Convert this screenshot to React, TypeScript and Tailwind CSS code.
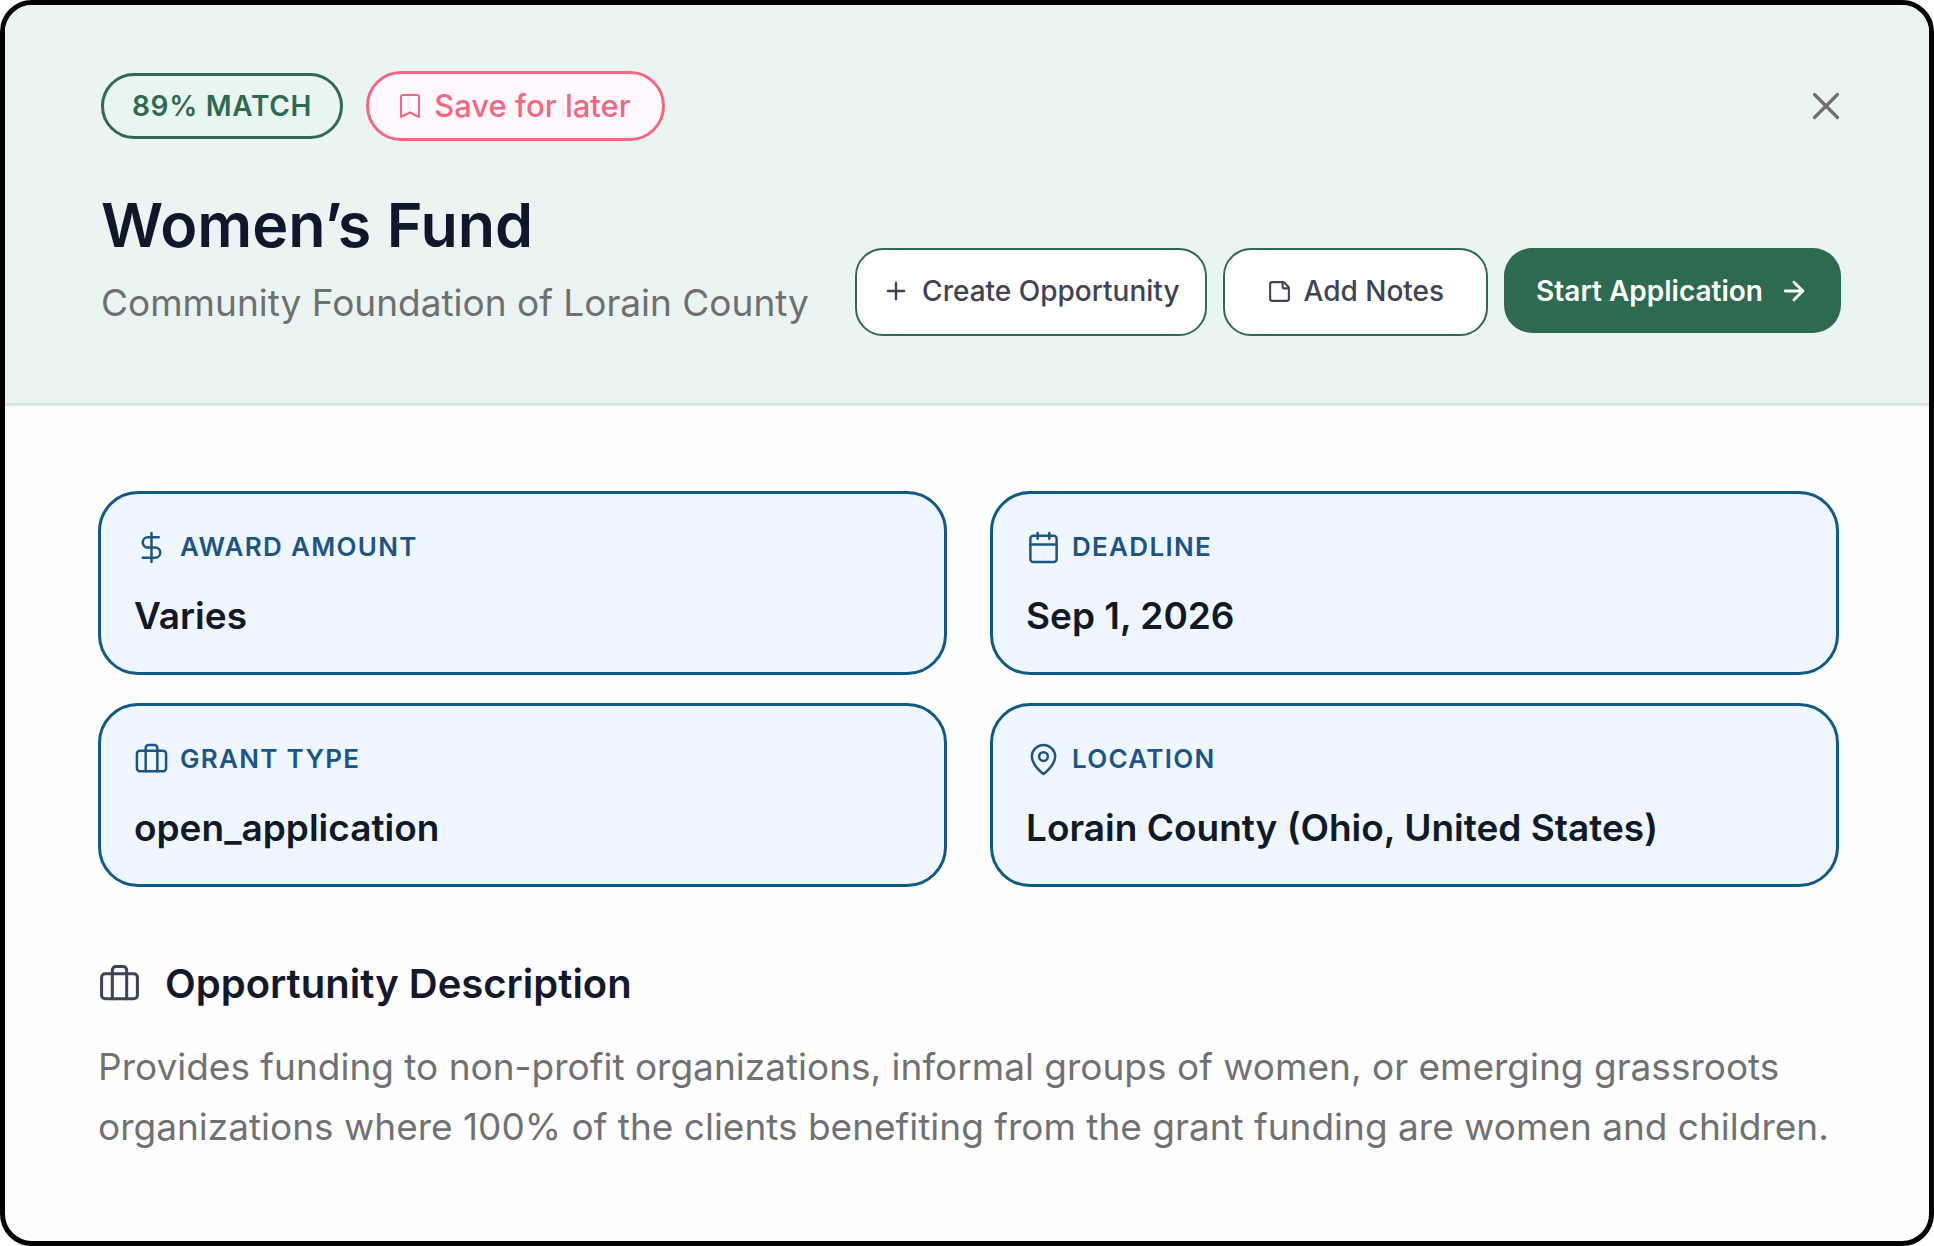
import type { ReactNode } from 'react'
import { ArrowRight, Calendar, DollarSign, Plus, StickyNote, X } from 'lucide-react'

function BriefcaseIcon({ className }: { className?: string }) {
  return (
    <svg
      viewBox="0 0 24 24"
      fill="none"
      stroke="currentColor"
      strokeWidth={1.7}
      strokeLinecap="round"
      strokeLinejoin="round"
      className={className}
      aria-hidden="true"
    >
      <rect x="2" y="6" width="20" height="14" rx="2" />
      <path d="M16 20V4a2 2 0 0 0-2-2h-4a2 2 0 0 0-2 2v16" />
    </svg>
  )
}

function PinIcon({ className }: { className?: string }) {
  return (
    <svg
      viewBox="0 0 24 24"
      fill="none"
      stroke="currentColor"
      strokeWidth={1.7}
      strokeLinecap="round"
      strokeLinejoin="round"
      className={className}
      aria-hidden="true"
    >
      <path d="M20 10c0 6-8 12-8 12s-8-6-8-12a8 8 0 0 1 16 0Z" />
      <circle cx="12" cy="10" r="3" />
    </svg>
  )
}

function BookmarkIcon({ className }: { className?: string }) {
  return (
    <svg
      viewBox="0 0 20 24"
      fill="none"
      stroke="currentColor"
      strokeWidth={2}
      strokeLinecap="round"
      strokeLinejoin="round"
      className={className}
      aria-hidden="true"
    >
      <path d="M19 23l-9-4.5L1 23V3a2 2 0 0 1 2-2h14a2 2 0 0 1 2 2z" />
    </svg>
  )
}

function DetailCard({ icon, label, value }: { icon: ReactNode; label: string; value: string }) {
  return (
    <div className="rounded-[40px] border-3 border-[#125a86] bg-[#eff6ff] pt-[35px] pr-8 pb-8 pl-[33px]">
      <dt className="flex items-center gap-[11px] text-[26px] leading-9 font-semibold tracking-wider text-[#1c5585] uppercase">
        {icon}
        {label}
      </dt>
      <dd className="mt-[27px] text-[37px] leading-12 font-semibold text-[#111827]">{value}</dd>
    </div>
  )
}

const details = [
  { label: 'Award Amount', value: 'Varies', icon: <DollarSign className="size-[35px]" strokeWidth={1.7} /> },
  { label: 'Deadline', value: 'Sep 1, 2026', icon: <Calendar className="size-[35px]" strokeWidth={1.7} /> },
  { label: 'Grant Type', value: 'open_application', icon: <BriefcaseIcon className="size-[35px]" /> },
  { label: 'Location', value: 'Lorain County (Ohio, United States)', icon: <PinIcon className="size-[35px]" /> },
]

export default function App() {
  return (
    <main className="flex min-h-screen flex-col overflow-hidden rounded-[32px] border-5 border-black bg-[#fefefe] font-['Inter',sans-serif]">
      <header className="border-b-3 border-[#d7e7e4] bg-[#eaf4f2] pt-[66px] pr-22 pb-[67px] pl-24">
        <div className="flex items-center gap-[23px]">
          <span className="rounded-full border-3 border-[#2d6a4f] bg-[#e9f5f0] px-7 py-3 text-[28px] leading-9 font-semibold tracking-wide text-[#2d6a4f]">
            89% MATCH
          </span>
          <button
            type="button"
            className="flex items-center gap-[14px] rounded-full border-3 border-[#f4687f] bg-[#fff8fe] px-[31px] py-3 text-[31px] leading-10 font-medium text-[#f4687f]"
          >
            <BookmarkIcon className="h-6 w-5" />
            Save for later
          </button>
          <button type="button" aria-label="Close" className="-mr-2 ml-auto text-[#6f6f6f]">
            <X className="size-[46px]" strokeWidth={1.7} />
          </button>
        </div>

        <div className="mt-12 flex items-end justify-between gap-8">
          <div className="pb-[9px]">
            <h1 className="text-[61px] leading-18 font-semibold text-[#0f172a]">Women’s Fund</h1>
            <p className="mt-[18px] text-[37px] leading-12 text-[#6f6f6f]">
              Community Foundation of Lorain County
            </p>
          </div>
          <div className="flex shrink-0 items-start gap-4 text-[28px] leading-9 font-medium">
            <button
              type="button"
              className="flex items-center gap-3 rounded-[28px] border-2 border-[#2d6a4f] bg-white px-[25px] pt-[23px] pb-[25px] text-[#3f4354]"
            >
              <Plus className="size-[28px]" strokeWidth={2} />
              Create Opportunity
            </button>
            <button
              type="button"
              className="flex items-center gap-3 rounded-[28px] border-2 border-[#2d6a4f] bg-white px-[42px] pt-[23px] pb-[25px] text-[#3f4354]"
            >
              <StickyNote className="size-[25px]" strokeWidth={2} />
              Add Notes
            </button>
            <button
              type="button"
              className="flex items-center gap-4 rounded-[28px] bg-[#2d6a4f] px-8 pt-[25px] pb-6 font-semibold text-white"
            >
              Start Application
              <ArrowRight className="size-[30px]" strokeWidth={2.3} />
            </button>
          </div>
        </div>
      </header>

      <div className="pt-[85px] pr-[90px] pb-20 pl-[93px]">
        <dl className="grid grid-cols-2 gap-x-[43px] gap-y-7">
          {details.map((detail) => (
            <DetailCard key={detail.label} {...detail} />
          ))}
        </dl>

        <section className="mt-[73px]">
          <h2 className="flex items-center gap-6 text-[40px] leading-12 font-semibold text-[#14182b]">
            <BriefcaseIcon className="size-[43px] text-[#3f4354]" />
            Opportunity Description
          </h2>
          <p className="mt-[29px] text-[37px] leading-[60px] text-[#717174]">
            Provides funding to non-profit organizations, informal groups of women, or emerging grassroots
            organizations where 100% of the clients benefiting from the grant funding are women and children.
          </p>
        </section>
      </div>
    </main>
  )
}
